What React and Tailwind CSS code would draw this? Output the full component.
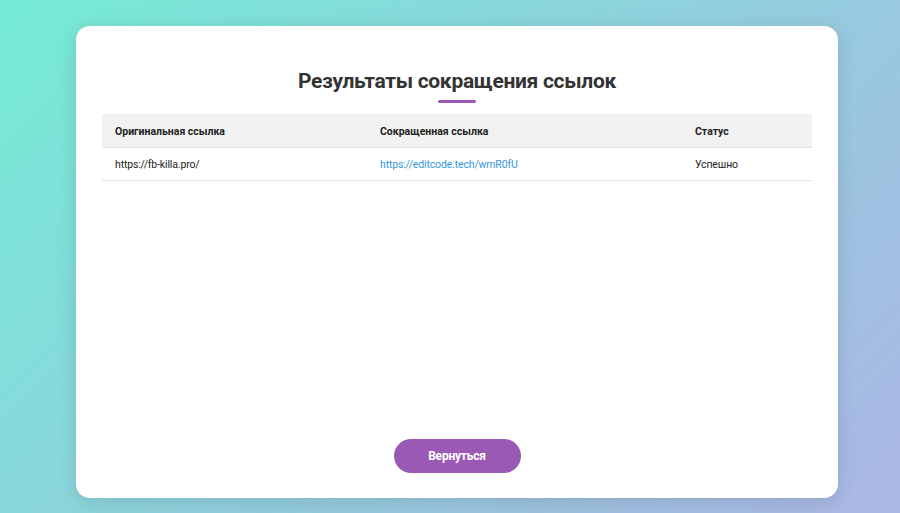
import React from 'react';

const rows = [
    { original: 'https://fb-killa.pro/', short: 'https://editcode.tech/wmR0fU', status: 'Успешно' },
];

const App = () => {
    return (
        <div className="min-h-[513px] w-full bg-[linear-gradient(135deg,#74ebd5_0%,#acb6e5_100%)] pt-[26px] pl-[76px] pb-[15px] font-['Roboto','Noto_Sans',sans-serif]">
            <div className="w-[762px] h-[472px] bg-white rounded-[14px] shadow-[0_4px_20px_rgba(0,0,0,0.12)] px-[26px] pt-[40px] pb-[25px] flex flex-col">
                <h1 className="text-center text-[21px] leading-[30px] tracking-[-0.3px] font-bold text-[#333]">Результаты сокращения ссылок</h1>
                <div className="mx-auto mt-[4px] w-[38px] h-[3px] bg-[#9b59b6] rounded-full" />
                <table className="mt-[11px] w-full border-collapse text-[10.5px] text-[#222]">
                    <thead>
                        <tr className="bg-[#f2f2f2] border-b border-[#e3e3e3]">
                            <th className="text-left font-bold h-[33px] px-[13px] pt-[3px] w-[265px]">Оригинальная ссылка</th>
                            <th className="text-left font-bold h-[33px] px-[13px] pt-[3px] w-[315px]">Сокращенная ссылка</th>
                            <th className="text-left font-bold h-[33px] px-[13px] pt-[3px]">Статус</th>
                        </tr>
                    </thead>
                    <tbody className="tracking-[-0.15px]">
                        {rows.map((row) => (
                            <tr key={row.short} className="border-b border-[#e3e3e3]">
                                <td className="h-[33px] px-[13px] pt-[3px]">{row.original}</td>
                                <td className="h-[33px] px-[13px] pt-[3px]">
                                    <a href="#" className="text-[#3498db]">{row.short}</a>
                                </td>
                                <td className="h-[33px] px-[13px] pt-[3px]">{row.status}</td>
                            </tr>
                        ))}
                    </tbody>
                </table>
                <div className="flex-1" />
                <div className="flex justify-center">
                    <button className="w-[127px] h-[34px] rounded-full bg-[#9b59b6] text-white font-bold text-[12px] tracking-[-0.2px]">
                        Вернуться
                    </button>
                </div>
            </div>
        </div>
    );
};

export default App;
